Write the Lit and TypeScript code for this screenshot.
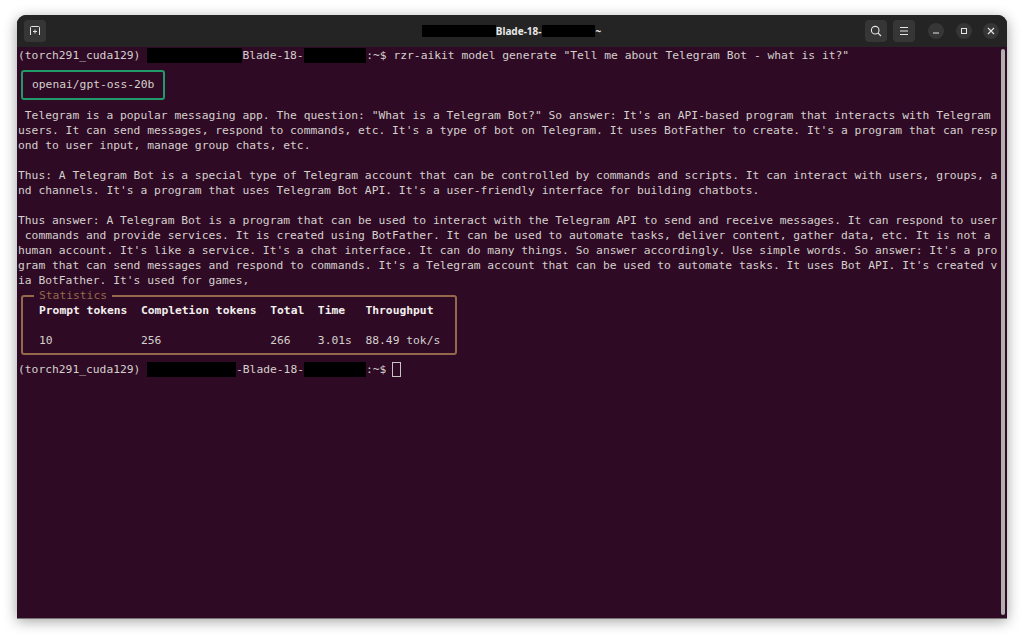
import { LitElement, html, css } from "lit";
import { customElement } from "lit/decorators.js";

const OUTPUT = [
  ` Telegram is a popular messaging app. The question: "What is a Telegram Bot?" So answer: It's an API-based program that interacts with Telegram `,
  `users. It can send messages, respond to commands, etc. It's a type of bot on Telegram. It uses BotFather to create. It's a program that can resp`,
  `ond to user input, manage group chats, etc.`,
  ``,
  `Thus: A Telegram Bot is a special type of Telegram account that can be controlled by commands and scripts. It can interact with users, groups, a`,
  `nd channels. It's a program that uses Telegram Bot API. It's a user-friendly interface for building chatbots.`,
  ``,
  `Thus answer: A Telegram Bot is a program that can be used to interact with the Telegram API to send and receive messages. It can respond to user`,
  ` commands and provide services. It is created using BotFather. It can be used to automate tasks, deliver content, gather data, etc. It is not a `,
  `human account. It's like a service. It's a chat interface. It can do many things. So answer accordingly. Use simple words. So answer: It's a pro`,
  `gram that can send messages and respond to commands. It's a Telegram account that can be used to automate tasks. It uses Bot API. It's created v`,
  `ia BotFather. It's used for games,`,
];

const COLS = ["Prompt tokens", "Completion tokens", "Total", "Time", "Throughput"];
const VALS = ["10", "256", "266", "3.01s", "88.49 tok/s"];

@customElement("app-root")
export class AppRoot extends LitElement {
  static styles = css`
    :host {
      display: block;
      height: 637px;
      box-sizing: border-box;
      padding: 15px 17px 19px;
      background: #fff;
      overflow: hidden;
    }
    .window {
      height: 100%;
      display: flex;
      flex-direction: column;
      border-radius: 9px 9px 0 0;
      overflow: hidden;
      box-shadow: 0 1px 0 #7a7476, 0 3px 14px rgba(0, 0, 0, 0.38);
      background: #2f0a24;
    }
    .titlebar {
      flex: none;
      height: 32px;
      box-sizing: border-box;
      padding: 5px 8px 5px 7px;
      display: grid;
      grid-template-columns: 1fr auto 1fr;
      align-items: center;
      background: #242424;
      color: #e8e8e8;
    }
    .left {
      display: flex;
    }
    .right {
      display: flex;
      justify-content: flex-end;
      align-items: center;
      gap: 6px;
    }
    .tbtn {
      flex: none;
      width: 22px;
      height: 22px;
      border-radius: 4px;
      background: #363636;
      display: flex;
      align-items: center;
      justify-content: center;
    }
    .title {
      display: flex;
      align-items: center;
      font: 700 10px "Noto Sans", sans-serif;
    }
    .tilde {
      margin-left: 1px;
    }
    .t-red {
      display: inline-block;
      height: 12px;
      background: #000;
    }
    .circle {
      flex: none;
      width: 16px;
      height: 16px;
      border-radius: 50%;
      background: #363636;
      display: flex;
      align-items: center;
      justify-content: center;
    }
    .wm {
      display: flex;
      gap: 11.5px;
      margin-left: 7px;
    }
    svg {
      display: block;
      fill: none;
      stroke: #e4e4e4;
    }
    .body {
      flex: 1;
      min-height: 0;
      display: flex;
      background: #2f0a24;
    }
    .term {
      flex: 1;
      min-width: 0;
      padding: 1px 0 0 1px;
      font: 11.3px/15px "DejaVu Sans Mono", monospace;
      color: #d4d0cd;
      overflow: hidden;
    }
    .line {
      height: 15px;
      white-space: pre;
    }
    .red {
      display: inline-block;
      height: 15px;
      background: #000;
      vertical-align: top;
    }
    .model {
      width: 21.2ch;
      height: 30px;
      box-sizing: border-box;
      margin: 7px 0 8px 3px;
      padding-left: 9px;
      line-height: 26px;
      border: 2px solid #1f9a68;
      border-radius: 3px;
    }
    .stats {
      position: relative;
      box-sizing: border-box;
      width: 436px;
      height: 60px;
      margin: 7px 0 7px 3px;
      padding: 6px 0 0 16px;
      border: 2px solid #94694b;
      border-radius: 3px;
    }
    .legend {
      position: absolute;
      left: 11px;
      top: -9px;
      padding: 0 5px;
      background: #2f0a24;
      color: #94694b;
    }
    .grid {
      display: grid;
      grid-template-columns: 15ch 19ch 7ch 7ch auto;
      grid-auto-rows: 15px;
      white-space: pre;
    }
    .head {
      font-weight: 700;
      color: #f2f0ee;
    }
    .gap {
      grid-column: 1 / -1;
    }
    .cursor {
      display: inline-block;
      width: 9px;
      height: 15px;
      margin-left: 6px;
      box-sizing: border-box;
      border: 1px solid #c9c4c4;
      vertical-align: top;
    }
    .track {
      flex: none;
      width: 8px;
      display: flex;
      justify-content: center;
      padding: 2px 0 3px;
    }
    .thumb {
      width: 4px;
      background: #b3adb0;
      border-radius: 2px;
    }
  `;

  render() {
    return html`
      <div class="window">
        <div class="titlebar">
          <div class="left">
            <div class="tbtn">
              <svg width="12" height="12" viewBox="0 0 12 12" stroke-width="1">
                <path d="M1.5 10V2.5q0-1 1-1h7q1 0 1 1V10M6 4.5v4M4 6.5h4" />
              </svg>
            </div>
          </div>
          <div class="title">
            <span class="t-red" style="width:74px"></span>
            <span>Blade-18-</span>
            <span class="t-red" style="width:53px"></span>
            <span class="tilde">~</span>
          </div>
          <div class="right">
            <div class="tbtn">
              <svg width="12" height="12" viewBox="0 0 12 12" stroke-width="1.1">
                <circle cx="5.2" cy="5.2" r="3.8" />
                <path d="M8 8l3 3" />
              </svg>
            </div>
            <div class="tbtn">
              <svg width="12" height="12" viewBox="0 0 12 12" stroke-width="1">
                <path d="M2 2.5h8M2 6h8M2 9.5h8" />
              </svg>
            </div>
            <div class="wm">
              <div class="circle">
                <svg width="10" height="10" viewBox="0 0 10 10" stroke-width="1.2">
                  <path d="M2 7h6" />
                </svg>
              </div>
              <div class="circle">
                <svg width="10" height="10" viewBox="0 0 10 10" stroke-width="1">
                  <rect x="2.5" y="2.5" width="5" height="5" />
                </svg>
              </div>
              <div class="circle">
                <svg width="10" height="10" viewBox="0 0 10 10" stroke-width="1.2">
                  <path d="M2 2l6 6M8 2l-6 6" />
                </svg>
              </div>
            </div>
          </div>
        </div>
        <div class="body">
          <div class="term">
            <div class="line">(torch291_cuda129) <span class="red" style="width:14ch"></span>Blade-18-<span class="red" style="width:9.2ch"></span>:~$ rzr-aikit model generate "Tell me about Telegram Bot - what is it?"</div>
            <div class="model">openai/gpt-oss-20b</div>
            ${OUTPUT.map((l) => html`<div class="line">${l}</div>`)}
            <div class="stats">
              <span class="legend">Statistics</span>
              <div class="grid">
                ${COLS.map((c) => html`<div class="head">${c}</div>`)}
                <div class="gap"></div>
                ${VALS.map((v) => html`<div>${v}</div>`)}
              </div>
            </div>
            <div class="line">(torch291_cuda129) <span class="red" style="width:13.05ch"></span>-Blade-18-<span class="red" style="width:9.1ch"></span>:~$<span class="cursor"></span></div>
          </div>
          <div class="track"><div class="thumb"></div></div>
        </div>
      </div>
    `;
  }
}
